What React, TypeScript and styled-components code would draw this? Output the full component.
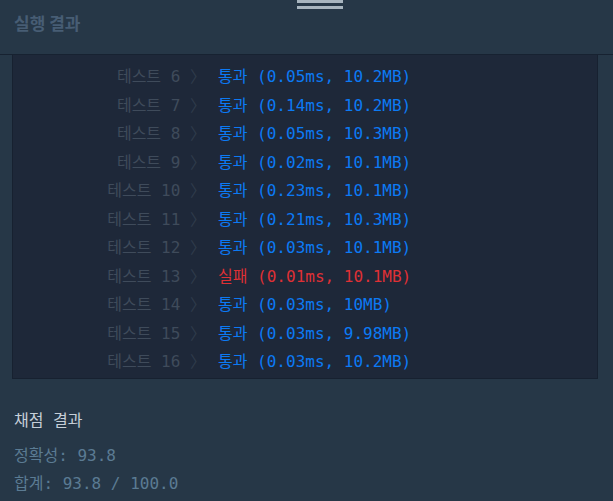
import styled, { createGlobalStyle } from "styled-components";

const GlobalStyle = createGlobalStyle`
  html, body {
    margin: 0;
    padding: 0;
    background-color: #263747;
  }
  body {
    width: 613px;
    height: 501px;
    overflow: hidden;
  }
`;

type Row = { no: number; passed: boolean; detail: string };

const rows: Row[] = [
  { no: 6, passed: true, detail: "(0.05ms, 10.2MB)" },
  { no: 7, passed: true, detail: "(0.14ms, 10.2MB)" },
  { no: 8, passed: true, detail: "(0.05ms, 10.3MB)" },
  { no: 9, passed: true, detail: "(0.02ms, 10.1MB)" },
  { no: 10, passed: true, detail: "(0.23ms, 10.1MB)" },
  { no: 11, passed: true, detail: "(0.21ms, 10.3MB)" },
  { no: 12, passed: true, detail: "(0.03ms, 10.1MB)" },
  { no: 13, passed: false, detail: "(0.01ms, 10.1MB)" },
  { no: 14, passed: true, detail: "(0.03ms, 10MB)" },
  { no: 15, passed: true, detail: "(0.03ms, 9.98MB)" },
  { no: 16, passed: true, detail: "(0.03ms, 10.2MB)" },
];

export default function App() {
  return (
    <>
      <GlobalStyle />
      <Page>
        <Header>
          <Handle>
            <HandleBar />
            <HandleBar />
          </Handle>
          <Title>실행 결과</Title>
        </Header>
        <Console>
          <ResultTable>
            {rows.map((r) => (
              <ResultRow key={r.no}>
                <Label>
                  테스트 {r.no} <Chevron>〉</Chevron>
                </Label>
                <Result $passed={r.passed}>
                  {r.passed ? "통과" : "실패"} {r.detail}
                </Result>
              </ResultRow>
            ))}
          </ResultTable>
        </Console>
        <Summary>
          <SummaryTitle>채점 결과</SummaryTitle>
          <SummaryLine>정확성: 93.8</SummaryLine>
          <SummaryLine>합계: 93.8 / 100.0</SummaryLine>
        </Summary>
      </Page>
    </>
  );
}

const Page = styled.div`
  display: flex;
  flex-direction: column;
  height: 501px;
  font-family: "DejaVu Sans Mono", "Noto Sans CJK KR", monospace;
`;

const Header = styled.div`
  display: flex;
  flex-direction: column;
  height: 55px;
  box-sizing: border-box;
  border-bottom: 1px solid #172231;
  padding: 0 14px;
`;

const Handle = styled.div`
  align-self: center;
  display: flex;
  flex-direction: column;
  gap: 3px;
  width: 46px;
  margin-left: 27px;
`;

const HandleBar = styled.div`
  height: 3px;
  background-color: #a8b5bf;
`;

const Title = styled.div`
  margin-top: 3px;
  font-family: "Noto Sans CJK KR", "Noto Sans", sans-serif;
  font-weight: 700;
  font-size: 17px;
  line-height: 22px;
  color: #475d74;
`;

const Console = styled.div`
  margin: 0 15px 0 12px;
  height: 324px;
  box-sizing: border-box;
  background-color: #1e2839;
  border: 1px solid #172130;
  border-top: none;
  overflow: hidden;
`;

const ResultTable = styled.div`
  display: grid;
  grid-template-columns: 193px 1fr;
  padding-top: 8px;
`;

const ResultRow = styled.div`
  display: contents;
`;

const Label = styled.div`
  text-align: right;
  font-size: 16px;
  line-height: 28.5px;
  color: #3f4b5b;
  white-space: pre;
`;

const Chevron = styled.span`
  color: #2f3b4b;
`;

const Result = styled.div<{ $passed: boolean }>`
  padding-left: 12px;
  font-size: 16px;
  line-height: 28.5px;
  color: ${(p) => (p.$passed ? "#0c7af4" : "#df3035")};
  white-space: pre;
`;

const Summary = styled.div`
  display: flex;
  flex-direction: column;
  padding: 29px 14px 0;
`;

const SummaryTitle = styled.div`
  font-size: 16px;
  line-height: 26px;
  color: #c6cfd8;
  margin-bottom: 8px;
`;

const SummaryLine = styled.div`
  font-size: 16px;
  line-height: 28px;
  color: #5b7b93;
`;
